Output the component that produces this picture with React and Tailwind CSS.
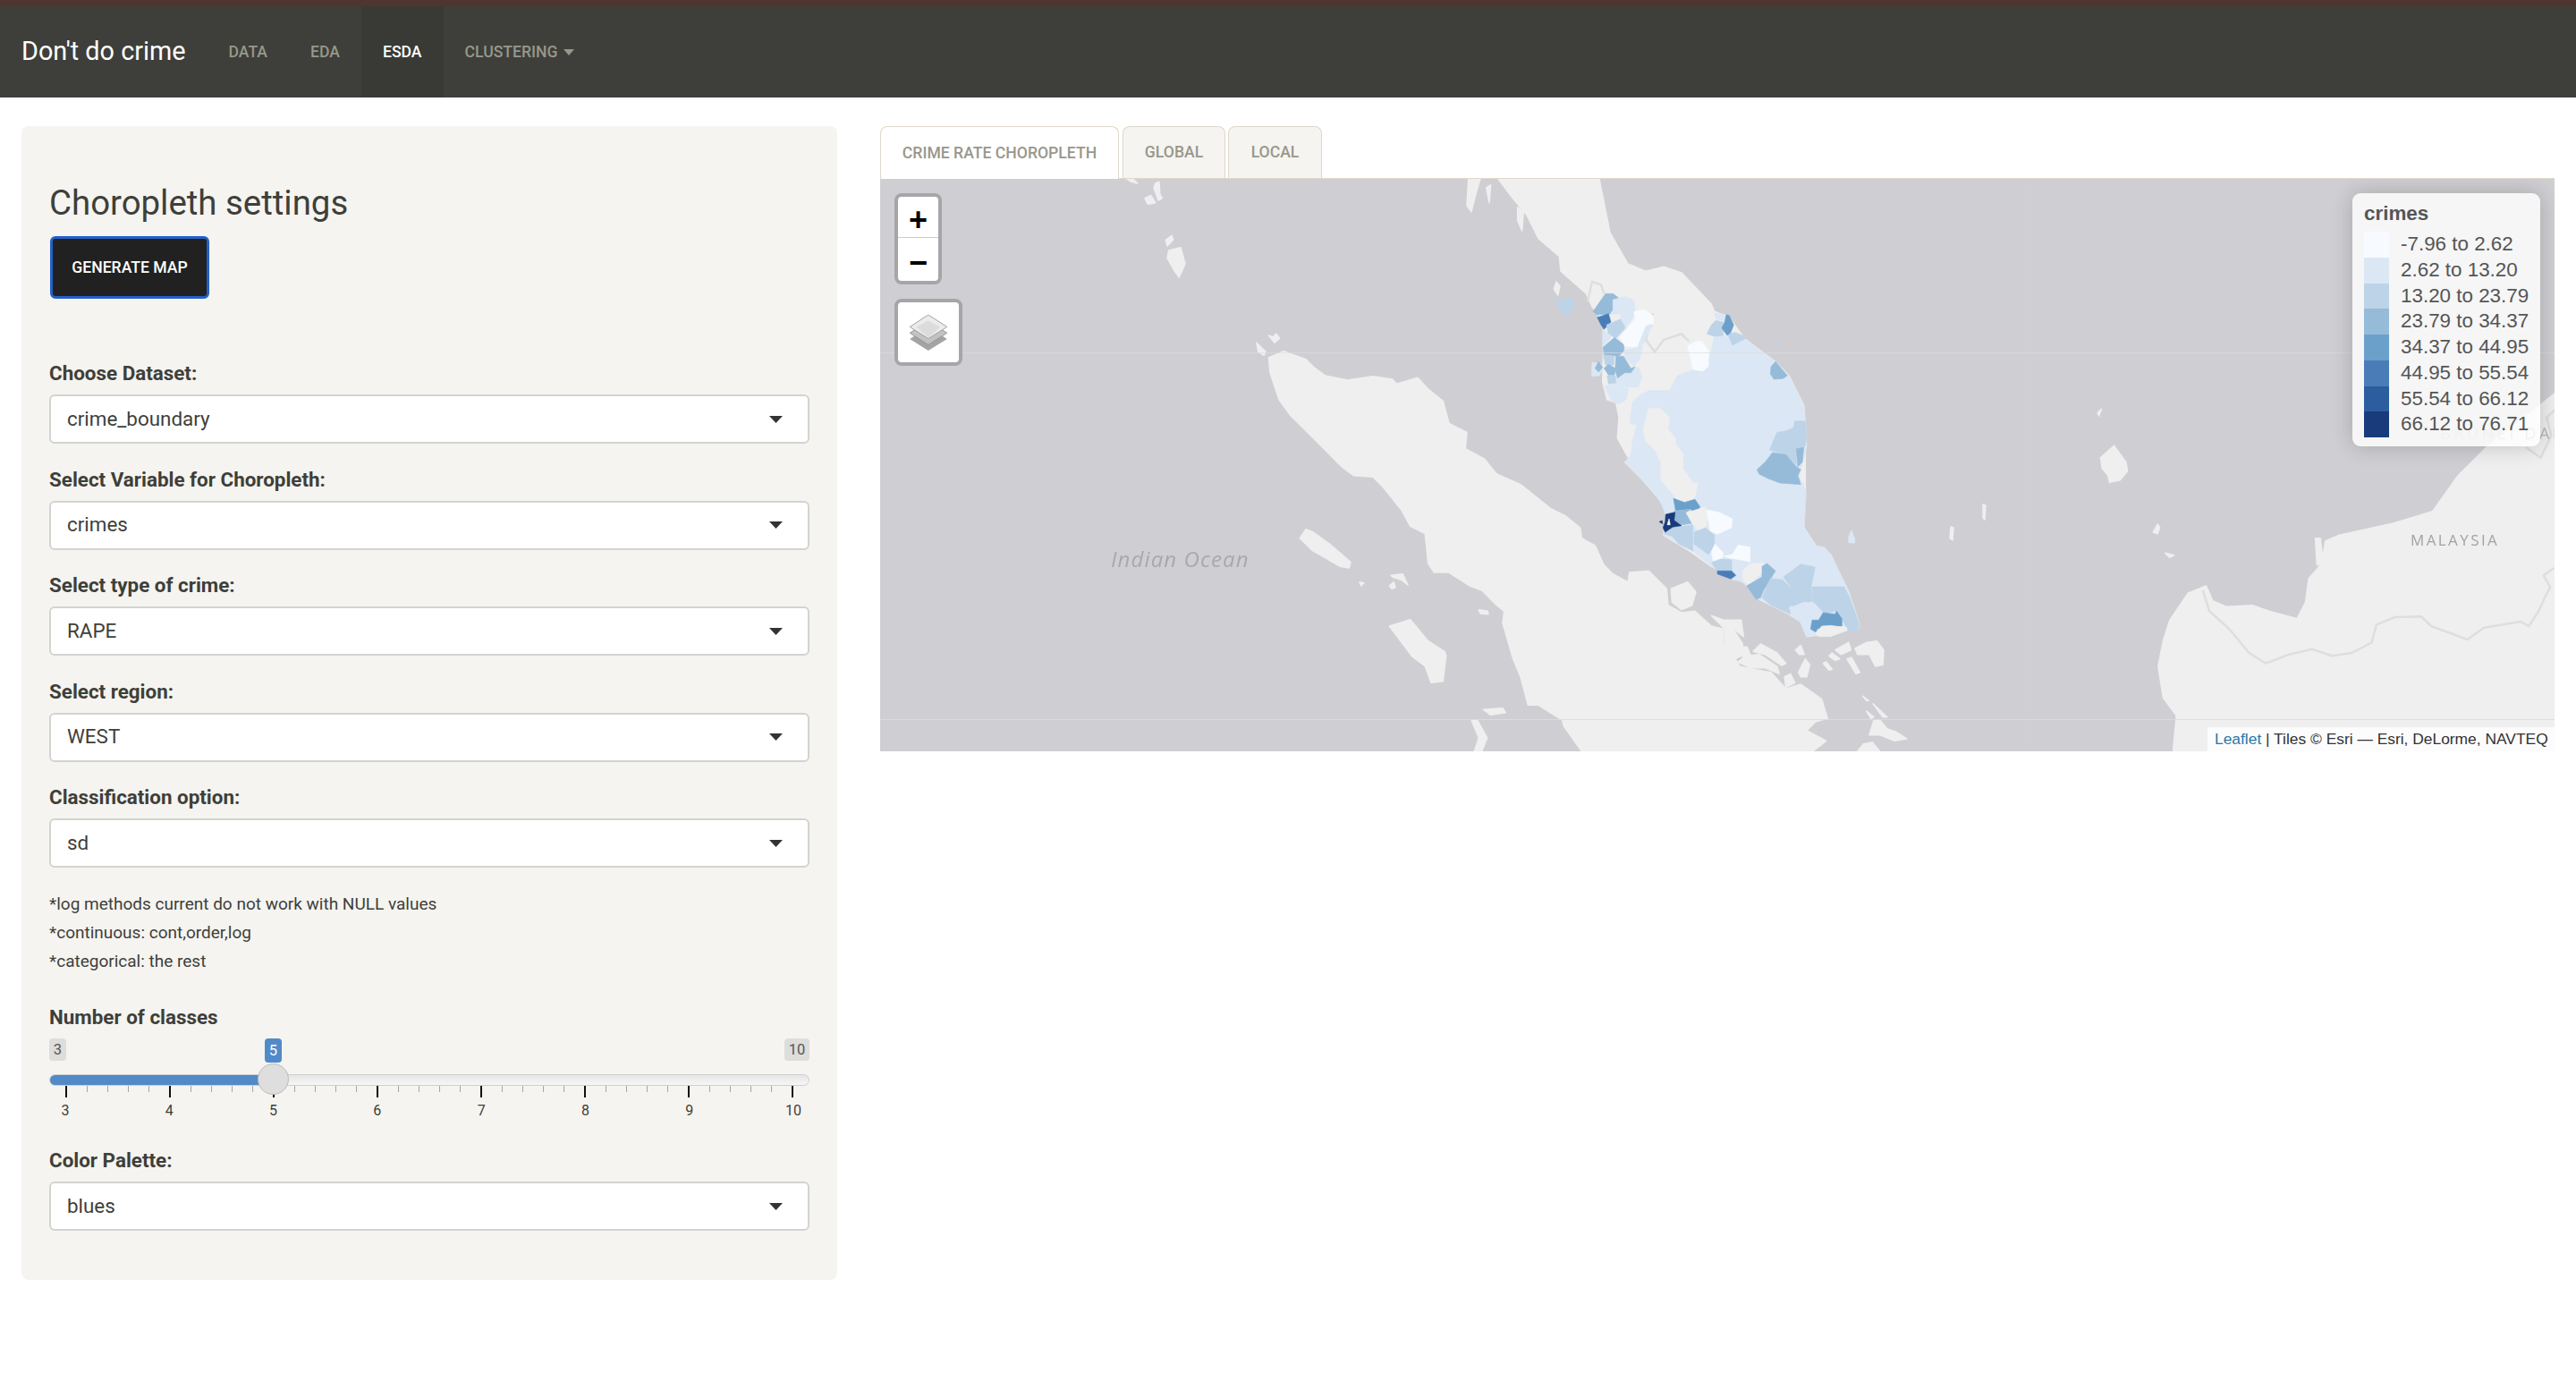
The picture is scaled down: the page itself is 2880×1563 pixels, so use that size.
import React from "react";

const pts = (ox, oy, s, sx = 3, sy = 3) =>
  s
    .trim()
    .split(/\s+/)
    .map((p) => {
      const [x, y] = p.split(",").map(Number);
      return `${(ox + x / sx).toFixed(1)},${(oy + y / sy).toFixed(1)}`;
    })
    .join(" ");

const Z9 = (s) => pts(1260, 200, s);
const Z10 = (s) => pts(1380, 500, s);
const Z11 = (s) => pts(1800, 620, s);
const Z4 = (s) => pts(1700, 260, s);
const Z5 = (s) => pts(1780, 540, s);
const Z8 = (s) => pts(2300, 560, s, 2.703, 3);
const Z12 = (s) => pts(2340, 380, s, 2.977, 3);

const LAND = "#efefef";
const C0 = "#f7fbff";
const C1 = "#dbe7f4";
const C2 = "#bdd3e8";
const C3 = "#95bbd9";
const C4 = "#6ba0cb";
const C5 = "#4a7db8";
const C6 = "#2b5d9f";
const C7 = "#193b7b";

const sumatra =
  Z9("475,600 525,578 600,605 625,630 665,660 740,675 825,662 890,672 905,688 975,667 1010,705 1060,745 1080,820 1140,850 1135,905 1200,940 1215,960") +
  " " +
  Z10("880,90 960,125 1060,205 1110,230 1160,270 1165,305 1210,330 1240,395 1270,425 1320,452") +
  " " +
  Z11("65,60 130,55 190,115 195,170 240,195 285,190 340,240 380,250 380,300 420,350 435,375 480,385 540,395 590,450 640,435 710,485 730,550 690,560 660,590 725,625 680,660") +
  " " +
  Z10("1165,1020 1105,935 1100,915 1020,865 985,865 960,770 935,710 900,590 905,550 880,530 830,480 790,465 720,420 670,420 650,390 640,290 590,265 560,210 500,135 465,100 400,95 360,65") +
  " " +
  Z9("650,895 550,795 510,740 480,650");

const peninsula =
  Z9("1245,0 1290,60 1340,120 1380,200 1450,260 1455,310 1540,385") +
  " " +
  Z4("240,249 250,260 280,300 275,500 290,560 320,570 330,620 325,690 370,770 350,770 410,830 470,900") +
  " " +
  Z5("250,100 240,175 330,230 400,280 510,335 560,390 660,440 700,465 720,515 755,510 850,490 895,490 895,470 860,370 800,240 750,210 710,150 710,40 695,0") +
  " " +
  Z4("955,870 955,660 950,580 900,480 850,430 750,355 700,285 650,265 640,240 540,135 480,115 420,130 360,105 300,0") +
  " 1788,200";

const borneo =
  "2856,440 " +
  Z12("1310,360 1215,455 1130,575 1000,615 820,655") +
  " " +
  Z8("810,135 800,210 760,260 750,340 725,395 640,370 590,350 510,355 470,335 450,285 395,310 340,400 320,470 305,555 320,660 360,720 350,838") +
  " 2856,840";

const landIslands = [
  Z9("1145,0 1185,0 1170,50 1155,110 1140,90"),
  Z9("1205,30 1220,20 1215,80"),
  Z9("1310,95 1330,110 1325,175 1310,140"),
  Z9("1440,345 1452,360 1445,390 1432,370"),
  Z9("130,205 150,190 155,205 135,225"),
  Z9("140,240 180,230 195,285 175,330 160,310 135,265"),
  Z9("60,65 80,55 95,80 70,85"),
  Z9("95,15 108,10 110,50 118,65 105,72 90,30"),
  Z9("0,0 20,0 35,15 15,10"),
  Z9("435,550 465,580 460,592 440,580"),
  Z9("475,525 490,530 500,520 512,535 495,550"),
  Z10("220,305 240,275 265,285 320,325 390,385 385,405 355,400 260,345"),
  Z10("420,452 435,455 425,465"),
  Z10("525,430 565,425 582,462 560,445 530,435"),
  Z10("520,465 535,452 540,470 528,475"),
  Z10("820,545 850,550 852,560 825,558"),
  Z10("520,600 590,578 650,650 705,685 710,700 700,785 660,790 640,735 595,700"),
  Z10("835,880 900,875 910,890 860,898"),
  Z10("795,915 815,915 848,975 830,1020 805,1020 820,975"),
  Z11("205,115 260,92 288,125 275,170 240,185 208,160"),
  Z11("340,205 380,220 440,220 448,275 410,245 385,250"),
  Z11("385,250 410,245 445,300 440,340 420,350 385,300"),
  Z11("440,310 460,310 470,335 445,345"),
  Z11("480,325 505,300 560,330 590,365 575,372 520,335"),
  Z11("430,360 455,340 500,335 560,375 568,400 520,380 470,380"),
  Z11("585,410 605,400 620,430 590,445"),
  Z11("632,395 655,350 670,370 660,410 640,410"),
  Z11("622,320 640,305 652,335 635,335"),
  Z11("715,365 725,360 745,385 735,388"),
  Z11("735,340 745,330 770,350 755,355"),
  Z11("755,320 800,295 808,320 775,335"),
  Z11("795,350 810,345 838,395 825,400"),
  Z11("822,315 860,295 895,290 918,320 915,370 890,375 870,335 830,335"),
  Z11("848,475 868,490 860,490"),
  Z11("882,500 930,545 915,545"),
  Z11("860,525 885,545 875,550"),
  Z11("870,605 885,555 905,555 930,585 960,595 995,618 955,625 905,605"),
  Z11("830,660 850,635 880,630 905,660"),
  Z12("25,395 70,355 110,410 115,440 90,470 55,478 50,455 30,430"),
  Z12("200,645 215,618 222,630 215,650"),
  Z12("240,715 270,722 255,730"),
  Z12("15,245 28,232 20,255"),
  Z8("780,125 795,125 805,210 785,215"),
  "2181,589 2184,590 2183,604 2180,602",
  "2217,564 2220,565 2219,581 2217,579",
];

const regions = [
  [C1, Z4("375,570 400,545 430,530 500,530 525,480 580,460 630,440 650,345 745,350 850,430 900,480 950,580 958,660 960,720 935,820 958,870 953,960 490,960 470,900 410,830 350,770 370,745 375,700 390,645 365,640")],
  [C1, Z5("190,0 710,0 710,150 750,210 780,215 800,240 860,360 895,470 895,490 850,495 855,480 780,480 750,510 720,515 700,465 660,440 560,390 510,335 400,280 340,230 240,175 250,100")],
  [LAND, Z4("430,590 470,590 500,620 495,660 520,690 520,710 545,740 545,790 590,860 580,890 530,900 470,830 470,770 450,730 420,700 410,660")],
  [LAND, Z5("255,0 355,0 345,50 310,65 280,50")],
  [C4, Z5("273,52 310,65 345,55 362,80 345,105 330,88 280,92")],
  [C3, Z5("275,95 330,88 315,100 335,135 300,140 275,125")],
  [C2, Z5("270,150 338,140 338,228 290,205 270,180")],
  [C2, Z5("240,170 270,150 275,180")],
  [C7, Z5("247,105 278,98 275,125 300,143 270,148 245,165 238,150 245,130")],
  [C7, Z5("225,130 235,126 236,137")],
  ["#ffffff", Z5("252,140 258,120 262,140")],
  [LAND, Z5("315,100 380,80 390,110 382,148 360,165 335,135")],
  [C0, Z5("385,90 425,98 470,120 468,150 420,172 395,160")],
  [C2, Z5("342,165 380,150 410,175 410,215 390,240 342,205")],
  [C0, Z5("400,230 412,205 440,235 435,258 405,260")],
  [C0, Z5("440,245 470,240 490,208 530,215 530,265 470,255")],
  [C2, Z5("400,268 430,255 475,258 470,295 420,295")],
  [C1, Z5("470,255 525,265 505,330 470,325")],
  [C5, Z5("420,295 468,295 482,310 465,322 420,305")],
  [LAND, Z5("505,295 530,270 575,268 570,300 525,345 505,325")],
  [C3, Z5("518,345 570,315 570,280 587,270 615,295 575,360 565,385 550,390")],
  [C2, Z5("570,385 598,320 640,325 668,355 655,375 665,440 600,410")],
  [C2, Z5("642,315 700,272 748,282 735,348 738,395 690,418 658,410 655,375 668,352")],
  [C2, Z5("738,348 845,348 862,380 895,470 895,490 860,500 835,450 815,430 775,440 740,400")],
  [C1, Z5("660,420 710,400 745,402 775,435 760,460 735,460 735,500 720,515 695,460")],
  [C4, Z5("760,460 775,435 815,440 820,430 838,455 838,480 785,480 755,490 750,500 733,490 738,460")],
  [LAND, Z5("750,505 770,480 800,478 855,485 855,495 800,515 760,515")],
  [C1, Z5("860,180 870,158 882,190 880,202 860,200")],
  [C3, Z4("243,265 285,205 310,205 330,220 310,260 300,275 255,275")],
  [C1, Z4("310,260 310,225 350,215 380,225 385,265 375,290 350,320 335,285 300,275")],
  [LAND, Z4("296,275 335,275 330,295 303,300")],
  [C5, Z4("257,285 295,272 303,300 280,325 270,310")],
  [C2, Z4("288,310 335,290 352,320 320,355 295,340")],
  [C1, Z4("395,320 445,310 420,350 415,370 395,385")],
  [C0, Z4("333,350 385,290 380,265 415,258 445,280 445,305 420,310 390,385 350,380")],
  [C1, Z4("275,325 295,340 305,350 275,385")],
  [C3, Z4("277,385 315,352 345,375 348,395 330,415 280,410")],
  [C1, Z4("348,395 390,385 410,380 400,425 380,450 350,420")],
  [C2, Z4("277,410 315,415 312,445 285,445")],
  [C1, Z4("320,490 350,472 395,450 408,485 395,518 360,520 320,508")],
  [C3, Z4("320,415 345,415 370,455 385,450 370,470 350,470 325,488 317,460")],
  [C3, Z4("280,455 295,442 318,455 315,478 295,478")],
  [C2, Z4("290,480 318,480 320,505 295,508")],
  [C1, Z4("282,515 320,508 362,525 355,560 330,575 305,565")],
  [C1, Z4("240,435 270,440 275,455 265,480 238,482")],
  [C3, Z4("250,455 262,433 275,452 262,468")],
  [C2, Z4("120,228 150,225 170,218 182,240 165,260 160,285 150,280 125,245")],
  [C1, Z4("650,270 690,275 685,295 655,290")],
  [C2, Z4("625,340 640,310 655,295 680,300 680,345 650,348")],
  [C2, Z4("695,340 720,335 745,345 755,355 710,378")],
  [C4, Z4("690,275 700,278 715,310 705,335 693,345 675,320 685,300")],
  [C0, Z4("560,380 590,365 608,365 630,395 630,450 610,465 580,460")],
  [C3, Z4("840,450 855,433 895,480 880,490 850,492 838,475")],
  [C2, Z4("852,368 860,365 860,378 852,378")],
  [C2, Z4("835,730 860,670 890,665 915,655 920,632 955,632 960,690 953,718 925,725 925,780 890,745")],
  [C3, Z4("925,725 950,720 945,770 930,785")],
  [C3, Z4("793,795 820,770 845,738 890,745 925,785 940,795 930,815 940,845 870,840 830,825 800,810")],
];

function MapDrawing() {
  return (
    <svg viewBox="984 200 1872 640" className="absolute inset-0 w-full h-full blur-[0.4px]">
      <rect x="984" y="200" width="1872" height="640" fill="#cfcfd3" />
      {[sumatra, peninsula, borneo, ...landIslands].map((p, i) => (
        <polygon key={i} points={p} fill={LAND} stroke={LAND} strokeWidth="1.5" strokeLinejoin="round" />
      ))}
      <polyline
        points={Z8("440,300 460,370 520,430 580,510 630,545 700,515 770,497 830,520 890,510 950,475 965,415 1020,390 1100,388 1130,420 1240,465 1290,425 1400,405 1425,420 1455,370 1475,320 1490,290 1470,250 1502,225")}
        fill="none"
        stroke="#dedede"
        strokeWidth="2.5"
        strokeLinejoin="round"
      />
      <polyline points={Z12("1548,225 1510,260 1525,320 1490,395 1440,360")} fill="none" stroke="#dedede" strokeWidth="2.5" />
      <polyline points={Z4("225,230 240,165 270,175 280,205")} fill="none" stroke="#dedede" strokeWidth="2.5" />
      <polyline points={Z4("445,270 420,360 450,400 480,360 540,340 565,365")} fill="none" stroke="#dedede" strokeWidth="2.5" />
      {regions.map(([c, p], i) => (
        <polygon key={i} points={p} fill={c} stroke={c} strokeWidth="0.6" strokeLinejoin="round" />
      ))}
      <line x1="984" y1="394.5" x2="2856" y2="394.5" stroke="#dddddd" strokeWidth="1.2" opacity="0.65" />
      <line x1="984" y1="804.5" x2="2856" y2="804.5" stroke="#dddddd" strokeWidth="1.2" opacity="0.9" />
      <line x1="1038" y1="200" x2="1038" y2="840" stroke="#dddddd" strokeWidth="1" opacity="0.15" />
      <line x1="2266" y1="200" x2="2266" y2="840" stroke="#dddddd" strokeWidth="1" opacity="0.15" />
      <text x="1242" y="634" fill="#a9a9ad" fontSize="24" fontStyle="italic" letterSpacing="1.1" fontFamily="'Open Sans', sans-serif">
        Indian Ocean
      </text>
      <text x="2695" y="610" fill="#a2a2a4" fontSize="17" letterSpacing="2.4" fontFamily="'Open Sans', sans-serif">
        MALAYSIA
      </text>
      <text x="2728" y="491" fill="#b8b8b8" fontSize="18" letterSpacing="3.6" fontFamily="'Open Sans', sans-serif">
        BRUNEI DARU
      </text>
    </svg>
  );
}

function LayersIcon() {
  return (
    <svg viewBox="0 0 127 122" className="w-[42px] h-[40px]">
      <polygon points="0,82 63,41 127,82 63,122" fill="#a4a4a4" />
      <polygon points="0,62 63,21 127,62 63,102" fill="#c2c2c2" stroke="#969696" strokeWidth="3" />
      <polygon points="0,41 63,0 127,41 63,81" fill="#ececec" stroke="#a0a0a0" strokeWidth="3" />
      <polygon points="22,41 63,20 104,41 63,78" fill="#dcdcdc" />
    </svg>
  );
}

function Caret() {
  return (
    <svg viewBox="0 0 15 8" className="w-[15px] h-[8px]">
      <polygon points="0,0 15,0 7.5,8" fill="#333333" />
    </svg>
  );
}

function Field({ label, value, className = "" }) {
  return (
    <div className={className}>
      <div className="h-[30px] leading-[30px] text-[22.4px] font-bold text-[#3e3f3a]">{label}</div>
      <div className="mt-[9px] h-[55px] rounded-[6px] border-2 border-[#d3d3d0] bg-white pl-[18px] pr-[28px] flex items-center justify-between">
        <span className="text-[22.4px] text-[#3e3f3a]">{value}</span>
        <Caret />
      </div>
    </div>
  );
}

const legend = [
  [C0, "-7.96 to 2.62"],
  [C1, "2.62 to 13.20"],
  [C2, "13.20 to 23.79"],
  [C3, "23.79 to 34.37"],
  [C4, "34.37 to 44.95"],
  [C5, "44.95 to 55.54"],
  [C6, "55.54 to 66.12"],
  [C7, "66.12 to 76.71"],
];

function Slider() {
  const ticks = Array.from({ length: 36 }, (_, i) => i);
  return (
    <div className="mt-[9px] h-[94px] relative">
      <div className="flex justify-between h-[26px] text-[16.5px] leading-[25px] text-[#555555]">
        <span className="w-[19px] h-[25px] rounded-[4px] bg-[#dddddb] text-center">3</span>
        <span className="w-[28px] h-[25px] rounded-[4px] bg-[#dddddb] text-center">10</span>
      </div>
      <span className="absolute left-[241px] top-0 w-[19px] h-[27px] rounded-[4px] bg-[#528ac8] text-white text-center text-[16.5px] leading-[27px]">
        5
      </span>
      <div className="relative mt-[14px] h-[13px] rounded-full border border-[#cfcfcf] bg-gradient-to-b from-[#e6e6e6] to-[#f6f6f6]">
        <div className="h-full rounded-l-full bg-[#528ac8]" style={{ width: "250px" }} />
        <div className="absolute left-[232px] top-[-13px] w-[35px] h-[35px] rounded-full border border-[#bcbcbc] bg-[#dedede]" />
      </div>
      <div className="flex justify-between items-start mx-[18px] h-[13px]">
        {ticks.map((i) => (
          <span key={i} className={i % 5 === 0 ? "w-[2px] h-[13px] bg-[#111111]" : "w-px h-[7px] bg-[#a5a5a5]"} />
        ))}
      </div>
      <div className="flex justify-between mx-[18px] mt-[5px] text-[16px] leading-[20px] text-[#3e3f3a]">
        {[3, 4, 5, 6, 7, 8, 9, 10].map((n) => (
          <span key={n} className="w-0 flex justify-center">
            {n}
          </span>
        ))}
      </div>
    </div>
  );
}

export default function App() {
  return (
    <div className="w-[2880px] h-[1563px] bg-white overflow-hidden font-['Roboto',sans-serif] text-[#3e3f3a]">
      <div className="h-[7px] bg-[#4e3530]" />
      <nav className="h-[102px] bg-[#3e3f3a] flex items-stretch">
        <div className="pl-[24px] pr-[24px] flex items-center text-[28.8px] text-white">Don't do crime</div>
        {[
          ["DATA", false],
          ["EDA", false],
          ["ESDA", true],
        ].map(([t, active]) => (
          <div
            key={t}
            className={
              active
                ? "px-[24px] flex items-center bg-[#393a35] text-white font-medium text-[17.6px]"
                : "px-[24px] flex items-center text-[#98978b] font-medium text-[17.6px]"
            }
          >
            {t}
          </div>
        ))}
        <div className="px-[24px] flex items-center gap-[7px] text-[#98978b] font-medium text-[17.6px]">
          CLUSTERING
          <svg viewBox="0 0 12 7" className="w-[12px] h-[7px]">
            <polygon points="0,0 12,0 6,7" fill="#98978b" />
          </svg>
        </div>
      </nav>
      <div className="flex items-start pt-[32px] pl-[24px] pr-[24px] gap-[48px]">
        <aside className="w-[912px] h-[1290px] rounded-[8px] bg-[#f5f4f0] px-[31px] pt-[63px]">
          <h2 className="h-[46px] leading-[46px] text-[38.4px] text-[#3e3f3a]">Choropleth settings</h2>
          <button className="mt-[14px] ml-px block w-[178px] h-[70px] rounded-[6px] border-[3px] border-[#2460c8] bg-[#212121] text-white font-medium text-[17.6px]">
            GENERATE MAP
          </button>
          <Field className="mt-[68px]" label="Choose Dataset:" value="crime_boundary" />
          <Field className="mt-[24.5px]" label="Select Variable for Choropleth:" value="crimes" />
          <Field className="mt-[24.5px]" label="Select type of crime:" value="RAPE" />
          <Field className="mt-[24.5px]" label="Select region:" value="WEST" />
          <Field className="mt-[24.5px]" label="Classification option:" value="sd" />
          <div className="mt-[25px] text-[19px] leading-[32px] text-[#3e3f3a]">
            <p>*log methods current do not work with NULL values</p>
            <p>*continuous: cont,order,log</p>
            <p>*categorical: the rest</p>
          </div>
          <div className="mt-[31px] h-[30px] leading-[30px] text-[22.4px] font-bold text-[#3e3f3a]">Number of classes</div>
          <Slider />
          <Field className="mt-[27px]" label="Color Palette:" value="blues" />
        </aside>
        <main className="w-[1872px]">
          <div className="h-[59px] flex items-end gap-[3px] border-b border-[#dfd7ca] text-[17.6px] font-medium text-[#98978b]">
            <div className="w-[267px] h-[59px] -mb-px rounded-t-[8px] border border-b-0 border-[#dfd7ca] bg-white flex items-center justify-center">
              CRIME RATE CHOROPLETH
            </div>
            <div className="w-[115px] h-[58px] rounded-t-[8px] border border-b-0 border-[#dfd7ca] bg-[#f5f4f0] flex items-center justify-center ml-px">
              GLOBAL
            </div>
            <div className="w-[105px] h-[58px] rounded-t-[8px] border border-b-0 border-[#dfd7ca] bg-[#f5f4f0] flex items-center justify-center">
              LOCAL
            </div>
          </div>
          <div className="relative h-[640px] overflow-hidden">
            <MapDrawing />
            <div className="absolute left-[16px] top-[16px] w-[53px] rounded-[8px] border-4 border-[#a6a6a9] bg-white font-['Liberation_Sans',sans-serif] text-black text-[36px] font-bold overflow-hidden">
              <div className="h-[46px] pt-[6px] flex items-center justify-center border-b border-[#cccccc]">+</div>
              <div className="h-[48px] pt-[7px] flex items-center justify-center">−</div>
            </div>
            <div className="absolute left-[16px] top-[134px] w-[76px] h-[75px] rounded-[8px] border-4 border-[#a6a6a9] bg-white flex items-center justify-center">
              <LayersIcon />
            </div>
            <div className="absolute left-[1646px] top-[16px] w-[210px] h-[283px] rounded-[9px] bg-[rgba(255,255,255,0.8)] shadow-[0_0_24px_rgba(0,0,0,0.2)] pl-[13px] pt-[10px] font-['Liberation_Sans',sans-serif] text-[22.4px] text-[#555555]">
              <div className="font-bold h-[26px] leading-[26px]">crimes</div>
              <div className="mt-[7px]">
                {legend.map(([c, t]) => (
                  <div key={t} className="flex items-center h-[28.75px]">
                    <span className="w-[28px] h-full" style={{ background: c }} />
                    <span className="ml-[13px] whitespace-nowrap -mt-[1px]">{t}</span>
                  </div>
                ))}
              </div>
            </div>
            <div className="absolute right-0 bottom-0 w-[388px] h-[27px] pl-[8px] bg-[rgba(255,255,255,0.8)] font-['Liberation_Sans',sans-serif] text-[17.4px] leading-[27px] text-[#333333] whitespace-nowrap">
              <span className="text-[#2a78a8]">Leaflet</span> | Tiles © Esri — Esri, DeLorme, NAVTEQ
            </div>
          </div>
        </main>
      </div>
    </div>
  );
}
